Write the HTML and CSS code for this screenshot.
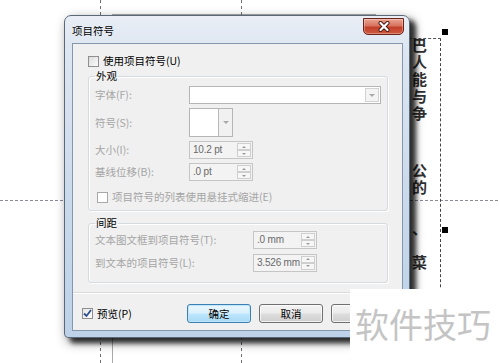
FILE: index.html
```html
<!DOCTYPE html>
<html lang="zh-CN">
<head>
  <meta charset="UTF-8" />
  <title>项目符号</title>
  <link rel="stylesheet" href="styles.css">
</head>
<body>
  <div class="desk">
    <!-- canvas behind the dialog -->
    <div class="page-frame"></div>
    <div class="guide guide-h"></div>
    <div class="guide guide-v guide-a"></div>
    <div class="guide guide-v guide-b"></div>

    <div class="text-frame"></div>
    <div class="text-col">
      <p class="vert">巴人能与争</p>
      <p class="vert para-2">公的</p>
      <p class="para-3">、</p>
      <p class="para-4">菜</p>
    </div>
    <span class="handle handle-top"></span>
    <span class="handle handle-mid"></span>

    <!-- dialog window -->
    <div class="dialog">
      <div class="titlebar">
        <span class="title">项目符号</span>
        <span class="close">
          <svg width="14" height="11" viewBox="0 0 14 11">
            <path d="M3.5 2 L10.5 9 M10.5 2 L3.5 9" stroke="#4a160d" stroke-width="4" stroke-linecap="round"/>
            <path d="M3.5 2 L10.5 9 M10.5 2 L3.5 9" stroke="#fff" stroke-width="2.2" stroke-linecap="round"/>
          </svg>
        </span>
      </div>

      <div class="client">
        <label class="check use-check"><span class="box"></span>使用项目符号(U)</label>

        <fieldset class="group look">
          <legend>外观</legend>
          <div class="grid look-grid">
            <span class="lbl">字体(F):</span>
            <div class="combo font-combo"><span class="drop"><i class="tri"></i></span></div>

            <span class="lbl">符号(S):</span>
            <div class="symbol-combo"><span class="symbol-box"></span><span class="symbol-drop"><i class="tri"></i></span></div>

            <span class="lbl">大小(I):</span>
            <div class="spin"><span class="val">10.2 pt</span><span class="arrows"><i class="up"></i><i class="down"></i></span></div>

            <span class="lbl">基线位移(B):</span>
            <div class="spin"><span class="val">.0 pt</span><span class="arrows"><i class="up"></i><i class="down"></i></span></div>
          </div>
          <label class="check hang-check"><span class="box"></span>项目符号的列表使用悬挂式缩进(E)</label>
        </fieldset>

        <fieldset class="group spacing">
          <legend>间距</legend>
          <div class="grid spacing-grid">
            <span class="lbl">文本图文框到项目符号(T):</span>
            <div class="spin"><span class="val">.0 mm</span><span class="arrows"><i class="up"></i><i class="down"></i></span></div>

            <span class="lbl">到文本的项目符号(L):</span>
            <div class="spin"><span class="val">3.526 mm</span><span class="arrows"><i class="up"></i><i class="down"></i></span></div>
          </div>
        </fieldset>

        <div class="separator"></div>

        <div class="footer">
          <label class="check preview-check">
            <span class="box checked">
              <svg width="9" height="9" viewBox="0 0 9 9"><path d="M1 4.5 L3.5 7 L8 1" fill="none" stroke="#2c4f8f" stroke-width="1.8"/></svg>
            </span>预览(P)
          </label>
          <div class="buttons">
            <button class="btn default">确定</button>
            <button class="btn">取消</button>
            <button class="btn"></button>
          </div>
        </div>
      </div>
    </div>

    <div class="watermark">软件技巧</div>
  </div>
</body>
</html>
```

FILE: styles.css
```css
* {
  margin: 0;
  padding: 0;
  box-sizing: border-box;
}

body {
  font-family: "Noto Sans CJK SC", "Noto Sans", sans-serif;
  background: #fff;
}

.desk {
  position: relative;
  width: 500px;
  height: 363px;
  overflow: hidden;
  background: #fff;
}

/* ---------- canvas ---------- */

.page-frame {
  position: absolute;
  left: 112px;
  top: 14px;
  width: 264px;
  height: 400px;
  border: 1px solid #a9a9a9;
}

.guide {
  position: absolute;
}

.guide-h {
  left: 0;
  top: 200px;
  width: 500px;
  height: 1px;
  background: repeating-linear-gradient(90deg, #8a8a98 0 3px, transparent 3px 5px);
}

.guide-v {
  top: 0;
  width: 1px;
  height: 363px;
  background: repeating-linear-gradient(180deg, #707070 0 3px, transparent 3px 6px);
}

.guide-a { left: 100px; }
.guide-b { left: 241px; }

.text-frame {
  position: absolute;
  left: 300px;
  top: 38px;
  width: 141px;
  height: 400px;
  border-top: 1px dashed #555;
  border-right: 1px dashed #444;
}

.text-col {
  position: absolute;
  left: 412px;
  top: 38px;
  font-size: 15px;
  line-height: 17px;
  font-weight: 700;
  color: #303030;
}

.text-col .vert {
  writing-mode: vertical-rl;
  text-orientation: upright;
  line-height: 15px;
  letter-spacing: 2px;
}

.para-2 { margin-top: 40px; }
.para-3 { margin-top: 22px; }
.para-4 { margin-top: 17px; }

.handle {
  position: absolute;
  left: 442px;
  width: 6px;
  height: 6px;
  background: #000;
}

.handle-top { top: 29px; }
.handle-mid { top: 227px; }

/* ---------- dialog ---------- */

.dialog {
  position: absolute;
  left: 64px;
  top: 15px;
  width: 346px;
  height: 323px;
  padding: 0 6px 6px 7px;
  border: 1px solid #5b6878;
  border-radius: 7px 7px 4px 4px;
  background: linear-gradient(180deg, #e9eef5 0%, #dde6f1 10%, #c9d9eb 60%, #bdd1e8 100%);
  box-shadow: 6px 5px 5px rgba(0, 0, 0, 0.75), 3px 4px 12px rgba(0, 0, 0, 0.45);
}

.titlebar {
  display: flex;
  align-items: flex-start;
  height: 27px;
}

.title {
  font-size: 10.5px;
  line-height: 12px;
  margin-top: 9px;
  color: #000;
}

.close {
  display: flex;
  align-items: center;
  justify-content: center;
  margin: 2px -1px 0 auto;
  width: 41px;
  height: 17px;
  border: 1px solid #6a2419;
  border-radius: 0 0 5px 5px;
  background: linear-gradient(180deg, #eaa493 0%, #d8735e 45%, #c2402a 55%, #cf5a40 100%);
  box-shadow: inset 0 0 0 1px rgba(255, 255, 255, 0.3);
}

.client {
  height: 288px;
  border: 1px solid #8497ad;
  background: #f0f0f0;
  padding: 11px 14px 0 15px;
  font-size: 10.5px;
  line-height: 12px;
  color: #000;
}

/* checkboxes */

.check {
  display: flex;
  align-items: center;
  gap: 4px;
  white-space: nowrap;
}

.box {
  display: flex;
  align-items: center;
  justify-content: center;
  width: 11px;
  height: 11px;
  border: 1px solid #8e8f8f;
  background: linear-gradient(135deg, #dcdcdc, #fbfbfb);
}

.box.checked {
  background: linear-gradient(135deg, #e6e6e6, #fff);
}

.use-check {
  height: 12px;
}

/* group boxes */

.group {
  border: 1px solid #d5dadf;
  border-radius: 3px;
  padding: 0 0 0 6px;
  width: 300px;
  box-shadow: inset 1px 1px 0 #fff, 1px 1px 0 #fff;
}

.group legend {
  padding: 0 1px;
  line-height: 12px;
  color: #000;
}

.look {
  margin-top: 3px;
  height: 141px;
}

.grid {
  display: grid;
  align-items: center;
}

.look-grid {
  grid-template-columns: 94px auto;
  grid-template-rows: 18px 29px 18px 18px;
  row-gap: 4px;
  margin-top: 4px;
}

.lbl {
  color: #a5a5a5;
  white-space: nowrap;
}

.combo {
  position: relative;
  height: 18px;
  width: 192px;
  border: 1px solid #b5b5b5;
  background: #fff;
}

.drop {
  position: absolute;
  right: 1px;
  top: 1px;
  width: 14px;
  height: 14px;
  border: 1px solid #d2d2d2;
  background: #f4f4f4;
  display: flex;
  align-items: center;
  justify-content: center;
}

.tri {
  width: 0;
  height: 0;
  border-left: 3px solid transparent;
  border-right: 3px solid transparent;
  border-top: 3px solid #a9a9a9;
}

.symbol-combo {
  display: flex;
  width: 44px;
  height: 29px;
  border: 1px solid #b5b5b5;
  background: #fff;
}

.symbol-box {
  width: 28px;
}

.symbol-drop {
  flex: 1;
  border-left: 1px solid #b8b8b8;
  background: #f1f1f1;
  display: flex;
  align-items: center;
  justify-content: center;
}

.spin {
  display: flex;
  align-items: center;
  height: 18px;
  width: 64px;
  border: 1px solid #c5c5c5;
  background: #f3f3f3;
  padding: 0 1px 0 3px;
}

.val {
  flex: 1;
  min-width: 0;
  overflow: hidden;
  white-space: nowrap;
  color: #6a6a6a;
  font-family: "Liberation Sans", "Noto Sans", sans-serif;
  font-size: 10px;
  letter-spacing: -0.2px;
}

.arrows {
  display: flex;
  flex-direction: column;
  flex: none;
  width: 14px;
  height: 14px;
}

.arrows i {
  flex: 1;
  border: 1px solid #cfcfcf;
  background: #f7f7f7;
  display: flex;
  align-items: center;
  justify-content: center;
}

.arrows i::after {
  content: "";
  border-left: 2px solid transparent;
  border-right: 2px solid transparent;
}

.arrows .up::after { border-bottom: 2px solid #9a9a9a; }
.arrows .down::after { border-top: 2px solid #9a9a9a; }

.hang-check {
  margin: 10px 0 0 2px;
  color: #a5a5a5;
}

.hang-check .box {
  border-color: #a8a8a8;
  background: #fff;
}

.spacing {
  margin-top: 6px;
  height: 66px;
}

.spacing-grid {
  grid-template-columns: 158px auto;
  grid-template-rows: 18px 19px;
  row-gap: 4px;
  margin-top: 2px;
}

.separator {
  margin: 9px -14px 0 -15px;
  height: 2px;
  border-top: 1px solid #dadada;
  border-bottom: 1px solid #fff;
}

.footer {
  display: flex;
  align-items: center;
  justify-content: space-between;
  margin: 10px -7px 0 -6px;
}

.buttons {
  display: flex;
  gap: 8px;
}

.btn {
  width: 64px;
  height: 19px;
  border: 1px solid #707070;
  border-radius: 3px;
  background: linear-gradient(180deg, #f3f3f3 0%, #ebebeb 48%, #dddddd 52%, #cfcfcf 100%);
  font-family: "Noto Sans CJK SC", sans-serif;
  font-size: 10.5px;
  line-height: 12px;
  color: #000;
  box-shadow: inset 0 0 0 1px rgba(255, 255, 255, 0.7);
}

.btn.default {
  border-color: #3c7fb1;
  background: linear-gradient(180deg, #eaf6fd 0%, #d9f0fc 48%, #bee6fd 52%, #a7d9f5 100%);
  box-shadow: inset 0 0 0 1px #bfe6fb;
}

/* ---------- watermark ---------- */

.watermark {
  position: absolute;
  left: 350px;
  top: 289px;
  width: 150px;
  height: 74px;
  background: #fff;
  padding: 16px 0 0 5px;
  font-size: 34px;
  line-height: 38px;
  color: #c4c4c4;
  white-space: nowrap;
}
```
